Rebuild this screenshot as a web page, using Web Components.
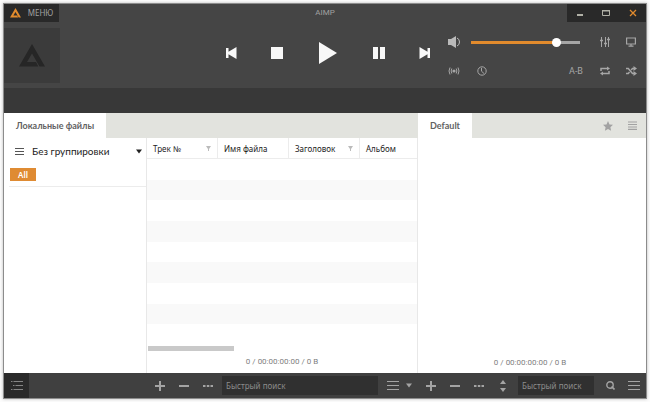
<!DOCTYPE html>
<html lang="ru">
<head>
<meta charset="utf-8">
<title>AIMP</title>
<style>
html, body { height: 100%; }
body { margin: 0; background: #fcfcfc; font-family: "Noto Sans", sans-serif; }
</style>
</head>
<body>
<player-window></player-window>
<script>
const ICONS = {
  logo: ['0 0 26 23', '<path fill="currentColor" d="M13 0 26 22.500H20.500L13 9.500 8 18H17L19.300 22.500H0Z"/>'],
  prev: ['0 0 12 12', '<path fill="currentColor" d="M1 1h2.500v3.800L11.500 0v12L3.500 7.200V11H1z"/>'],
  next: ['0 0 12 12', '<path fill="currentColor" d="M11 1H8.500v3.800L.5 0v12l8-4.800V11H11z"/>'],
  stop: ['0 0 12 12', '<path fill="currentColor" d="M0 0h12v12H0z"/>'],
  play: ['0 0 18 22', '<path fill="currentColor" d="M0 0v22l18-11z"/>'],
  pause: ['0 0 12 12', '<path fill="currentColor" d="M0 0h5v12H0zM7 0h5v12H7z"/>'],
  speaker: ['0 0 12 12', '<path fill="currentColor" d="M0 3h3L8 0v12L3 9H0z"/><path d="M9 2q2.500 1 2.500 4T9 10" fill="none" stroke="currentColor"/>'],
  eq: ['0 0 10 10', '<path stroke="currentColor" fill="none" d="M1.500 0v10M5.500 0v10M8.500 0v10"/><path stroke="currentColor" fill="none" stroke-width="1.400" d="M0 3.500h3M4 6.500h3M7 2.500h3"/>'],
  screen: ['0 0 10 10', '<path stroke="currentColor" fill="none" stroke-width="1.200" d="M.6 1h8.800v6H.6zM5 7v2M2.500 9.200h5"/>'],
  radio: ['0 0 12 10', '<circle cx="6" cy="5" r="1.600" fill="currentColor"/><path stroke="currentColor" fill="none" d="M3.800 2.500Q2.500 5 3.800 7.500M8.200 2.500Q9.500 5 8.200 7.500M2 1.500Q0 5 2 8.500M10 1.500Q12 5 10 8.500"/>'],
  clock: ['0 0 10 10', '<circle cx="5" cy="5" r="4.200" stroke="currentColor" fill="none"/><path stroke="currentColor" fill="none" d="M4.500 2v3.200L7 7.500"/>'],
  repeat: ['0 0 10 10', '<path stroke="currentColor" stroke-width="1.500" fill="none" d="M1 5V2.500h6.500M9 5v2.500H2.500"/><path fill="currentColor" d="M7 .5 10 2.500 7 4.500zM3 9.500 0 7.500 3 5.500z"/>'],
  shuffle: ['0 0 11 10', '<path stroke="currentColor" stroke-width="1.500" fill="none" d="M0 2.500h2.300L6.500 7.500H8M0 7.500h2.300l1.200-1.400M5.200 3.900 6.500 2.500H8"/><path fill="currentColor" d="M7.500 0 11 2.500 7.500 5zM7.500 5 11 7.500 7.500 10z"/>'],
  minimize: ['0 0 6 8', '<path fill="currentColor" d="M0 5h6v2H0z"/>'],
  maximize: ['0 0 8 8', '<path fill="none" stroke="currentColor" d="M.5 1.500h7v5h-7z"/><path fill="currentColor" d="M0 1h8v1.500H0z"/>'],
  close: ['0 0 8 8', '<path stroke="currentColor" stroke-width="1.300" d="m1 1 6 6M7 1 1 7"/>'],
  lines: ['0 0 9 7', '<path stroke="currentColor" d="M0 .5h9M0 3.500h9M0 6.500h9"/>'],
  stack: ['0 0 9 9', '<path stroke="currentColor" stroke-width="1.200" d="M0 1h9M0 3.500h9M0 6h9M0 8.400h9"/>'],
  bars: ['0 0 12 9', '<path stroke="currentColor" d="M0 .5h12M0 4.500h12M0 8.500h12"/>'],
  tree: ['0 0 12 9', '<path stroke="currentColor" d="M0 .5h1.500M2.500.5H12M2 4.500h1.500M4.500 4.500H12M0 8.500h1.500M2.500 8.500H12"/>'],
  down: ['0 0 6 5', '<path fill="currentColor" d="M0 .5h6L3 4.500z"/>'],
  funnel: ['0 0 5 5', '<path fill="currentColor" d="M0 0h5L3 3v2H2V3z"/>'],
  star: ['0 0 10 10', '<path fill="currentColor" d="m5 0 1.500 3.400 3.500.4-2.600 2.400.7 3.500L5 8 1.900 9.700l.7-3.500L0 3.800l3.500-.4z"/>'],
  plus: ['0 0 10 10', '<path fill="currentColor" d="M4 0h2v4h4v2H6v4H4V6H0V4h4z"/>'],
  minus: ['0 0 10 10', '<path fill="currentColor" d="M0 4h10v2H0z"/>'],
  dots: ['0 0 10 10', '<path fill="currentColor" d="M0 4h2.500v2H0zM3.800 4h2.500v2H3.800zM7.500 4H10v2H7.500z"/>'],
  sort: ['0 0 6 12', '<path fill="currentColor" d="M3 0l3 4H0zM0 8h6l-3 4z"/>'],
  search: ['0 0 9 9', '<circle cx="4" cy="4" r="3.200" fill="none" stroke="currentColor" stroke-width="1.400"/><path stroke="currentColor" stroke-width="1.600" d="M5.500 5.500 8.500 8.500"/>']
};

const BASE = `<style>
:host { display: block; box-sizing: border-box; }
* { box-sizing: border-box; }
button, input, select { font: inherit; color: inherit; margin: 0; padding: 0; border: 0; background: none; min-width: 0; }
button { display: flex; align-items: center; justify-content: center; flex: none; }
</style>`;

class Part extends HTMLElement {
  connectedCallback() {
    if (this.shadowRoot) return;
    const t = document.createElement('template');
    t.innerHTML = BASE + this.render();
    this.attachShadow({ mode: 'open' }).append(t.content.cloneNode(true));
  }
}

const define = (name, render) =>
  customElements.define(name, class extends Part { render() { return render(this); } });

define('ui-icon', el => {
  const [box, body] = ICONS[el.getAttribute('name')];
  const [, , w, h] = box.split(' ');
  const width = el.getAttribute('width') || w;
  return `<style>:host { display: block; flex: none; width: ${width}px; } svg { display: block; width: 100%; }</style>
  <svg viewBox="${box}" style="aspect-ratio: ${w} / ${h}" aria-hidden="true">${body}</svg>`;
});

const btn = (icon, label, cls = '') =>
  `<button type="button" class="${cls}" aria-label="${label}"><ui-icon name="${icon}"></ui-icon></button>`;

define('title-bar', () => `<style>
:host { display: grid; grid-template-columns: 1fr auto 1fr; height: 18px; font-size: 8px; line-height: 18px; color: #a0a0a0; }
.menu { justify-self: start; width: 55px; gap: 7px; background: #292929; }
.menu ui-icon { color: #e28b2d; }
.win { justify-self: end; display: flex; width: 79px; background: #292929; color: #b0b0a6; }
.win button { flex: 1; }
.win .close { color: #e28b2d; }
.name { font-family: Roboto, sans-serif; }
</style>
<button type="button" class="menu"><ui-icon name="logo" width="11"></ui-icon><span>МЕНЮ</span></button>
<span class="name">AIMP</span>
<div class="win">${btn('minimize', 'Свернуть')}${btn('maximize', 'Развернуть')}${btn('close', 'Закрыть', 'close')}</div>`);

define('transport-controls', () => `<style>
:host { display: flex; align-items: center; height: 62px; color: #f8f8f8; }
button { width: 46px; height: 32px; }
.play { width: 56px; }
</style>
${btn('prev', 'Назад')}${btn('stop', 'Стоп')}${btn('play', 'Играть', 'play')}${btn('pause', 'Пауза')}${btn('next', 'Вперёд')}`);

define('sound-controls', () => `<style>
:host { display: flex; flex-direction: column; gap: 9px; padding: 10px 8px 0 0; color: #a6a6a6; }
div { display: flex; align-items: center; height: 20px; }
button { width: 14px; height: 20px; margin-left: 12px; }
button:first-child { width: 12px; margin-left: 0; }
.speaker { color: #bababa; }
input { flex: 1; margin: 0 6px 0 11px; height: 9px; appearance: none; }
input::-webkit-slider-runnable-track { height: 3px; background: linear-gradient(90deg, #e28b2d 80%, #a6a6a6 80%); }
input::-webkit-slider-thumb { appearance: none; width: 9px; height: 9px; margin-top: -3px; border-radius: 50%; background: #fff; }
.clock { margin-left: 15px; }
.ab { margin-left: auto; margin-right: 3px; width: 14px; font: 9px Roboto, sans-serif; white-space: nowrap; }
</style>
<div>${btn('speaker', 'Звук', 'speaker')}<input type="range" aria-label="Громкость" min="0" max="100" value="81">${btn('eq', 'Эквалайзер')}${btn('screen', 'Визуализация')}</div>
<div>${btn('radio', 'Радио')}${btn('clock', 'Таймер', 'clock')}<button type="button" class="ab">A-B</button>${btn('repeat', 'Повтор')}${btn('shuffle', 'Случайно')}</div>`);

define('player-header', () => `<style>
:host { background: #454545; }
.body { display: grid; grid-template-columns: minmax(56px, 204fr) 240px minmax(0, 198fr); height: 66px; }
.art { width: 56px; height: 55px; margin-top: 6px; background: #3b3b3b; color: #262626; display: grid; place-items: center; }
</style>
<title-bar></title-bar>
<div class="body"><div class="art"><ui-icon name="logo"></ui-icon></div><transport-controls></transport-controls><sound-controls></sound-controls></div>`);

define('tab-strip', () => `<style>
:host { display: flex; height: 25px; background: #e2e3de; color: #a2a2a2; }
button.tab { padding: 0 12px; background: #fff; color: #626262; font: 700 9px Lato, sans-serif; }
.tools { margin-left: auto; display: flex; align-items: center; gap: 15px; padding-right: 9px; }
</style>
<button type="button" class="tab"><slot></slot></button><div class="tools"><slot name="tools"></slot></div>`);

define('group-panel', () => `<style>
:host { padding-left: 5px; border-right: 1px solid #e8e8e8; background: #fff; color: #222; }
.group { display: flex; align-items: center; height: 26px; padding: 0 4px 0 6px; gap: 8px; font: 10px Lato, sans-serif; }
.group > ui-icon { color: #555; }
.group > ui-icon:last-child { color: #222; }
select { flex: 1; appearance: none; height: 26px; }
.filters { padding: 4px 0 5px 1px; border-bottom: 1px solid #ececec; }
.filters button { width: 26px; height: 13px; background: #df8b33; color: #fff; font-size: 8px; font-weight: 600; }
</style>
<div class="group"><ui-icon name="lines"></ui-icon><select aria-label="Группировка"><option>Без группировки</option></select><ui-icon name="down"></ui-icon></div>
<div class="filters"><button type="button">All</button></div>`);

define('track-table', () => `<style>
:host { display: flex; flex-direction: column; background: #fff; border-right: 1px solid #e8e8e8; }
.rows { flex: 1; min-height: 0; overflow: hidden; }
table { width: 100%; height: 100%; table-layout: fixed; border-collapse: separate; border-spacing: 0; font-size: 8px; color: #222; }
th { height: 21px; padding: 0 6px; text-align: left; font-weight: 400; border-right: 1px solid #ececec; border-bottom: 1px solid #ececec; width: 71px; white-space: nowrap; }
th:last-child { border-right: 0; width: auto; }
th div { display: flex; align-items: center; justify-content: space-between; }
th ui-icon { color: #bbb; }
td { padding: 0; }
tbody tr:nth-child(even) { background: #f9f9f9; }
.thumb { width: 86px; height: 5px; margin: 1px 0 0 1px; background: #c9c9c9; }
.total { height: 22px; font: 8px/21px Roboto, sans-serif; color: #808080; text-align: center; }
</style>
<div class="rows"><table><thead><tr><th><div>Трек №<ui-icon name="funnel"></ui-icon></div></th><th>Имя файла</th><th><div>Заголовок<ui-icon name="funnel"></ui-icon></div></th><th>Альбом</th></tr></thead>
<tbody>${'<tr><td></td><td></td><td></td><td></td></tr>'.repeat(9)}</tbody></table></div>
<div class="thumb"></div><div class="total">0 / 00:00:00:00 / 0 B</div>`);

define('play-list', () => `<style>
:host { display: flex; align-items: flex-end; justify-content: center; background: #fff; font: 8px/20px Roboto, sans-serif; color: #808080; padding-right: 4px; }
</style><span><slot></slot></span>`);

define('tool-bar', el => `<style>
:host { display: flex; align-items: center; height: 25px; background: #404040; color: #a4a4a4; }
button { width: 24px; height: 25px; }
.tree { width: 25px; background: #2a2a2a; color: #858585; }
.view { width: 18px; }
.arrow { width: 13px; margin-right: 3px; }
input { flex: 1; height: 19px; padding: 0 4px; background: #303030; font-size: 8px; }
input::placeholder { color: #8c8c8c; opacity: 1; }
.mid { margin: 0 6px 0 2px; }
.end { margin: 0 4px 0 3px; }
.lead { margin-left: 1px; }
</style>` + {
  tree: btn('tree', 'Фонотека', 'tree'),
  library: btn('plus', 'Добавить', 'lead') + btn('minus', 'Удалить') + btn('dots', 'Ещё')
    + '<input class="mid" type="text" aria-label="Поиск в фонотеке" placeholder="Быстрый поиск">' + btn('bars', 'Меню', 'view') + btn('down', 'Вид', 'arrow'),
  playlist: btn('plus', 'Добавить', 'lead') + btn('minus', 'Удалить') + btn('dots', 'Ещё') + btn('sort', 'Сортировка')
    + '<input class="end" type="text" aria-label="Поиск в плейлисте" placeholder="Быстрый поиск">' + btn('search', 'Найти') + btn('bars', 'Меню')
}[el.getAttribute('kind')]);

define('player-window', () => `<style>
:host { height: 100vh; padding: 4px; }
.frame { height: 100%; display: grid; grid-template: 84px 25px 25px minmax(0, 1fr) 25px / 143px minmax(0, 271fr) minmax(0, 228fr); box-shadow: 0 0 0 1px #8c8c8c, 0 0 3px 1px #bbb; }
player-header, .strip { grid-column: 1 / -1; }
.strip { background: #383838; }
.library { grid-column: span 2; }
.tool { border: 0; padding: 0; background: none; color: inherit; }
</style>
<div class="frame">
<player-header></player-header>
<div class="strip"></div>
<tab-strip class="library">Локальные файлы</tab-strip>
<tab-strip>Default<button class="tool" slot="tools" type="button" aria-label="Избранное"><ui-icon name="star"></ui-icon></button><button class="tool" slot="tools" type="button" aria-label="Меню плейлиста"><ui-icon name="stack"></ui-icon></button></tab-strip>
<group-panel></group-panel><track-table></track-table><play-list>0 / 00:00:00:00 / 0 B</play-list>
<tool-bar kind="tree"></tool-bar><tool-bar kind="library"></tool-bar><tool-bar kind="playlist"></tool-bar>
</div>`);
</script>
</body>
</html>
